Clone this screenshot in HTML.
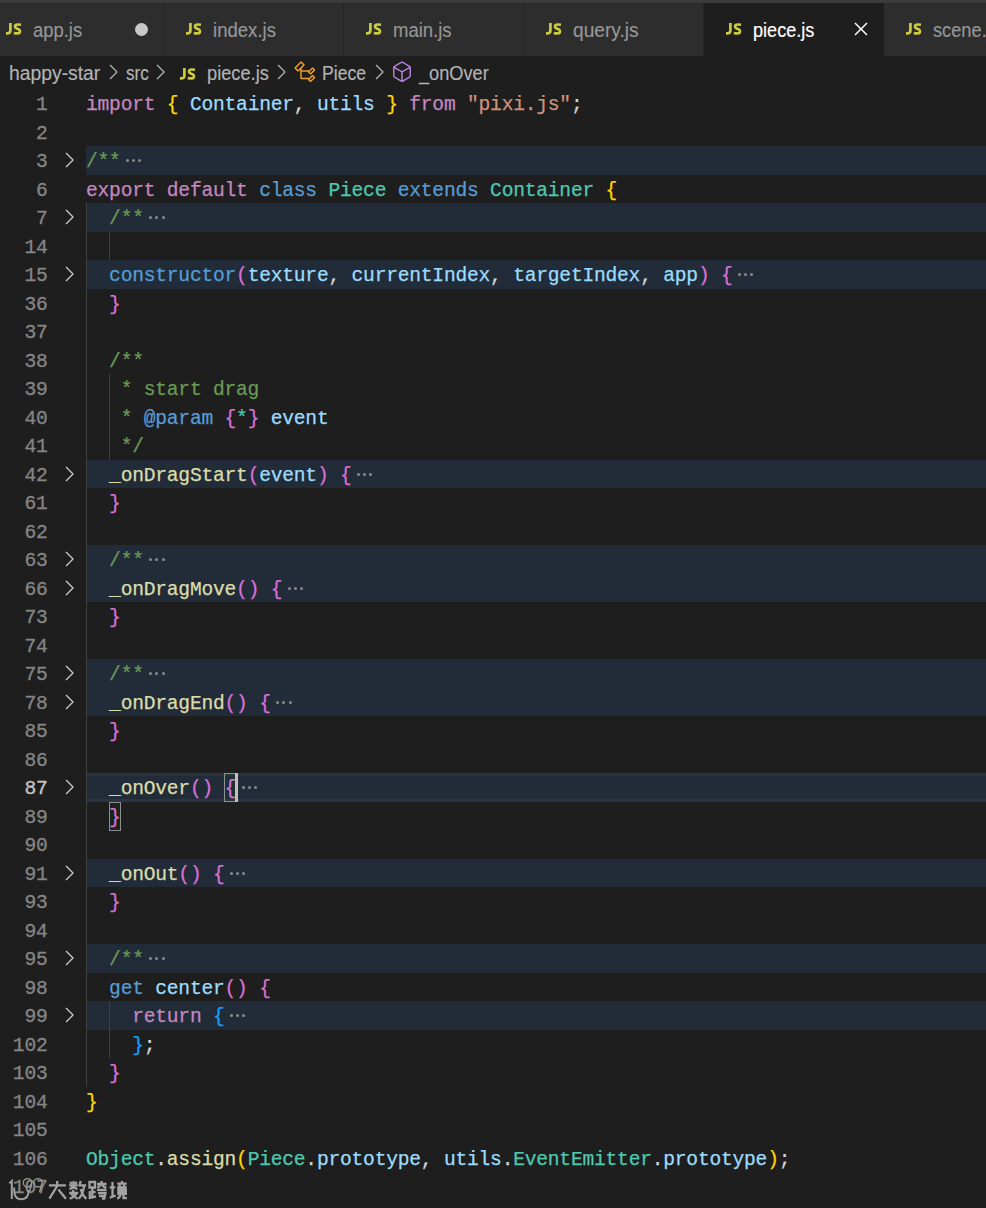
<!DOCTYPE html>
<html><head><meta charset="utf-8"><style>
*{margin:0;padding:0;box-sizing:border-box}
html,body{width:986px;height:1208px;overflow:hidden;background:#1e1e1e}
body{position:relative;font-family:"Liberation Sans",sans-serif}
#topstrip{position:absolute;left:0;top:0;width:986px;height:3px;background:#3b3b3b}
#tabs{position:absolute;left:0;top:3px;width:986px;height:53px;background:#252526;overflow:hidden}
.tab{position:absolute;top:0;width:179px;height:53px;background:#2d2d2d}
.tab.active{background:#1e1e1e;width:180px}
.tab .js{position:absolute;left:22px;top:19px;}
.tab .nm{position:absolute;left:49px;top:14px;font-size:18px;color:#979797;white-space:nowrap;line-height:24px}
.tab.active .nm{color:#ffffff}
.dirty{position:absolute;left:151px;top:20px;width:12px;height:12px;border-radius:6px;background:#c5c5c5}
.close{position:absolute;left:151px;top:20px}
#crumbs{position:absolute;left:0;top:56px;width:986px;height:33px;background:#1e1e1e;color:#c3c3c3;font-size:18px;white-space:nowrap}
#crumbs span{position:absolute;top:5px;line-height:24px}
#crumbs svg{position:absolute}
.row{position:absolute;left:86px;height:28.5px;line-height:28.5px;font-family:"Liberation Mono",monospace;font-size:19.6px;letter-spacing:-0.214px;white-space:pre;color:#d4d4d4;padding-top:1.5px;-webkit-text-stroke:0.25px currentColor}
.row span{white-space:pre}
.ln{position:absolute;left:0;width:47.5px;text-align:right;height:28.5px;line-height:28.5px;font-family:"Liberation Mono",monospace;font-size:19.6px;letter-spacing:-0.214px;color:#858585;padding-top:1.5px;-webkit-text-stroke:0.3px currentColor}
.lact{color:#c6c6c6}
.fb{position:absolute;left:86px;width:900px;height:28.5px;background:#212c38}
.fb.act{border-top:3px solid #2a3541;border-bottom:3px solid #2a3541}
.chev{position:absolute;left:57.1px}
.dots{position:absolute;height:3px;width:20px}
.dots i{position:absolute;top:0;width:3px;height:3px;border-radius:1.5px;background:#8a8a8a}
.dots i:nth-child(1){left:0}
.dots i:nth-child(2){left:6.2px}
.dots i:nth-child(3){left:12.4px}
.g{position:absolute;width:1px;background:#404040}
.k{color:#c586c0}.s{color:#569cd6}.t{color:#4ec9b0}.v{color:#9cdcfe}.f{color:#dcdcaa}.q{color:#ce9178}
.c{color:#6a9955}.p{color:#d4d4d4}.y{color:#ffd700}.o{color:#da70d6}.u{color:#179fff}
.bm{position:absolute;border:1.3px solid #8f8f8f;background:rgba(0,100,0,0.1)}
.cursor{position:absolute;width:3px;background:#c0c0c0}
#wm{position:absolute;left:0;top:1170px}
</style></head>
<body>
<div id="topstrip"></div>
<div id="tabs"></div><div style="position:absolute;left:-16px;top:3px;width:179px;height:53px;background:#2d2d2d"></div><svg style="position:absolute;left:6px;top:22.7px" width="16" height="12" viewBox="0 0 16 12"><g fill="none" stroke="#cbcb41" stroke-width="2.7"><path d="M4.4 0 V7.6 Q4.4 10.3 1.8 10.3 H0"/><path d="M15 1.7 Q13.5 1.5 11.8 1.5 Q9 1.5 9 3.5 Q9 5 11.8 5.9 Q14 6.6 14 8.2 Q14 10.4 11.4 10.4 Q9.6 10.4 7.8 9.9" stroke-width="2.6"/></g></svg><div style="position:absolute;left:32.50px;top:21.39px;font-size:19.5px;line-height:19.5px;color:#969696;white-space:nowrap;-webkit-text-stroke:0.15px #969696;transform:scaleX(0.9438);transform-origin:0 0;">app.js</div><div style="position:absolute;left:134.9px;top:22.5px;width:13px;height:13px;border-radius:50%;background:#c8c8c8"></div><div style="position:absolute;left:164px;top:3px;width:179px;height:53px;background:#2d2d2d"></div><svg style="position:absolute;left:186px;top:22.7px" width="16" height="12" viewBox="0 0 16 12"><g fill="none" stroke="#cbcb41" stroke-width="2.7"><path d="M4.4 0 V7.6 Q4.4 10.3 1.8 10.3 H0"/><path d="M15 1.7 Q13.5 1.5 11.8 1.5 Q9 1.5 9 3.5 Q9 5 11.8 5.9 Q14 6.6 14 8.2 Q14 10.4 11.4 10.4 Q9.6 10.4 7.8 9.9" stroke-width="2.6"/></g></svg><div style="position:absolute;left:212.70px;top:21.39px;font-size:19.5px;line-height:19.5px;color:#969696;white-space:nowrap;-webkit-text-stroke:0.15px #969696;transform:scaleX(0.9527);transform-origin:0 0;">index.js</div><div style="position:absolute;left:344px;top:3px;width:179px;height:53px;background:#2d2d2d"></div><svg style="position:absolute;left:366px;top:22.7px" width="16" height="12" viewBox="0 0 16 12"><g fill="none" stroke="#cbcb41" stroke-width="2.7"><path d="M4.4 0 V7.6 Q4.4 10.3 1.8 10.3 H0"/><path d="M15 1.7 Q13.5 1.5 11.8 1.5 Q9 1.5 9 3.5 Q9 5 11.8 5.9 Q14 6.6 14 8.2 Q14 10.4 11.4 10.4 Q9.6 10.4 7.8 9.9" stroke-width="2.6"/></g></svg><div style="position:absolute;left:392.60px;top:21.39px;font-size:19.5px;line-height:19.5px;color:#969696;white-space:nowrap;-webkit-text-stroke:0.15px #969696;transform:scaleX(0.9486);transform-origin:0 0;">main.js</div><div style="position:absolute;left:524px;top:3px;width:179px;height:53px;background:#2d2d2d"></div><svg style="position:absolute;left:546px;top:22.7px" width="16" height="12" viewBox="0 0 16 12"><g fill="none" stroke="#cbcb41" stroke-width="2.7"><path d="M4.4 0 V7.6 Q4.4 10.3 1.8 10.3 H0"/><path d="M15 1.7 Q13.5 1.5 11.8 1.5 Q9 1.5 9 3.5 Q9 5 11.8 5.9 Q14 6.6 14 8.2 Q14 10.4 11.4 10.4 Q9.6 10.4 7.8 9.9" stroke-width="2.6"/></g></svg><div style="position:absolute;left:572.50px;top:21.39px;font-size:19.5px;line-height:19.5px;color:#969696;white-space:nowrap;-webkit-text-stroke:0.15px #969696;transform:scaleX(0.9831);transform-origin:0 0;">query.js</div><div style="position:absolute;left:704px;top:3px;width:180px;height:53px;background:#1e1e1e"></div><svg style="position:absolute;left:726px;top:22.7px" width="16" height="12" viewBox="0 0 16 12"><g fill="none" stroke="#cbcb41" stroke-width="2.7"><path d="M4.4 0 V7.6 Q4.4 10.3 1.8 10.3 H0"/><path d="M15 1.7 Q13.5 1.5 11.8 1.5 Q9 1.5 9 3.5 Q9 5 11.8 5.9 Q14 6.6 14 8.2 Q14 10.4 11.4 10.4 Q9.6 10.4 7.8 9.9" stroke-width="2.6"/></g></svg><div style="position:absolute;left:753.00px;top:21.39px;font-size:19.5px;line-height:19.5px;color:#ffffff;white-space:nowrap;-webkit-text-stroke:0.15px #ffffff;transform:scaleX(0.9286);transform-origin:0 0;">piece.js</div><svg style="position:absolute;left:849.4px;top:16.6px" width="24" height="24" viewBox="0 0 16 16"><path d="M8 8.707l3.646 3.647.708-.707L8.707 8l3.647-3.646-.707-.708L8 7.293 4.354 3.646l-.707.708L7.293 8l-3.646 3.646.707.708L8 8.707z" fill="#ffffff"/></svg><div style="position:absolute;left:884px;top:3px;width:179px;height:53px;background:#2d2d2d"></div><svg style="position:absolute;left:906px;top:22.7px" width="16" height="12" viewBox="0 0 16 12"><g fill="none" stroke="#cbcb41" stroke-width="2.7"><path d="M4.4 0 V7.6 Q4.4 10.3 1.8 10.3 H0"/><path d="M15 1.7 Q13.5 1.5 11.8 1.5 Q9 1.5 9 3.5 Q9 5 11.8 5.9 Q14 6.6 14 8.2 Q14 10.4 11.4 10.4 Q9.6 10.4 7.8 9.9" stroke-width="2.6"/></g></svg><div style="position:absolute;left:932.70px;top:21.39px;font-size:19.5px;line-height:19.5px;color:#969696;white-space:nowrap;-webkit-text-stroke:0.15px #969696;transform:scaleX(0.9350);transform-origin:0 0;">scene.js</div>
<div id="crumbs"></div><div style="position:absolute;left:9.40px;top:62.97px;font-size:20px;line-height:20px;color:#b4b4b4;white-space:nowrap;-webkit-text-stroke:0.15px #b4b4b4;transform:scaleX(0.9661);transform-origin:0 0;">happy-star</div><svg style="position:absolute;left:101.4275px;top:59.8px" width="24" height="24" viewBox="0 0 16 16"><path d="M10.072 8.024L5.715 3.667l.618-.62L11 7.716v.618L6.333 13l-.618-.619 4.357-4.357z" fill="#b4b4b4"/></svg><div style="position:absolute;left:125.50px;top:62.97px;font-size:20px;line-height:20px;color:#b4b4b4;white-space:nowrap;-webkit-text-stroke:0.15px #b4b4b4;transform:scaleX(0.8552);transform-origin:0 0;">src</div><svg style="position:absolute;left:148.4275px;top:59.8px" width="24" height="24" viewBox="0 0 16 16"><path d="M10.072 8.024L5.715 3.667l.618-.62L11 7.716v.618L6.333 13l-.618-.619 4.357-4.357z" fill="#b4b4b4"/></svg><svg style="position:absolute;left:180px;top:68px" width="16" height="12" viewBox="0 0 16 12"><g fill="none" stroke="#cbcb41" stroke-width="2.7"><path d="M4.4 0 V7.6 Q4.4 10.3 1.8 10.3 H0"/><path d="M15 1.7 Q13.5 1.5 11.8 1.5 Q9 1.5 9 3.5 Q9 5 11.8 5.9 Q14 6.6 14 8.2 Q14 10.4 11.4 10.4 Q9.6 10.4 7.8 9.9" stroke-width="2.6"/></g></svg><div style="position:absolute;left:206.70px;top:62.97px;font-size:20px;line-height:20px;color:#b4b4b4;white-space:nowrap;-webkit-text-stroke:0.15px #b4b4b4;transform:scaleX(0.9112);transform-origin:0 0;">piece.js</div><svg style="position:absolute;left:269.02750000000003px;top:59.8px" width="24" height="24" viewBox="0 0 16 16"><path d="M10.072 8.024L5.715 3.667l.618-.62L11 7.716v.618L6.333 13l-.618-.619 4.357-4.357z" fill="#b4b4b4"/></svg><svg style="position:absolute;left:292.5px;top:59.8px" width="24" height="24" viewBox="0 0 16 16"><path d="M11.34 9.71h.71l2.67-2.67v-.71L13.38 5h-.7l-1.82 1.81h-5V5.56l1.86-1.85V3l-2-2H5L1 5v.71l2 2h.71l1.14-1.15v5.79l.5.5H10v.52l1.33 1.34h.71l2.67-2.67v-.71L13.37 10h-.7l-1.86 1.85h-5v-4H10v.48l1.34 1.38zm1.69-3.65l.63.63-2 2-.63-.63 2-2zm0 5l.63.63-2 2-.63-.63 2-2zM3.35 6.65L2.06 5.36l3.29-3.3 1.3 1.3-3.3 3.29z" fill="#ee9d28"/></svg><div style="position:absolute;left:321.70px;top:62.97px;font-size:20px;line-height:20px;color:#b4b4b4;white-space:nowrap;-webkit-text-stroke:0.15px #b4b4b4;transform:scaleX(0.8816);transform-origin:0 0;">Piece</div><svg style="position:absolute;left:367.2275px;top:59.8px" width="24" height="24" viewBox="0 0 16 16"><path d="M10.072 8.024L5.715 3.667l.618-.62L11 7.716v.618L6.333 13l-.618-.619 4.357-4.357z" fill="#b4b4b4"/></svg><svg style="position:absolute;left:390px;top:59.8px" width="24" height="24" viewBox="0 0 16 16"><path d="M13.51 4l-5-3h-1l-5 3-.49.86v6l.49.85 5 3h1l5-3 .49-.85v-6L13.51 4zm-6 9.56l-4.5-2.7V5.7l4.5 2.45v5.41zM3.27 4.7l4.74-2.84 4.74 2.84-4.74 2.59L3.27 4.7zm9.74 6.16l-4.5 2.7V8.15l4.5-2.45v5.16z" fill="#b180d7"/></svg><div style="position:absolute;left:418.69px;top:62.97px;font-size:20px;line-height:20px;color:#b4b4b4;white-space:nowrap;-webkit-text-stroke:0.15px #b4b4b4;transform:scaleX(0.9089);transform-origin:0 0;">_onOver</div>
<div id="editor">
<div class="fb" style="top:146px;height:29px"></div><div class="fb" style="top:203px;height:29px"></div><div class="fb" style="top:260px;height:29px"></div><div class="fb" style="top:460px;height:28px"></div><div class="fb" style="top:545px;height:29px"></div><div class="fb" style="top:574px;height:28px"></div><div class="fb" style="top:659px;height:29px"></div><div class="fb" style="top:688px;height:28px"></div><div class="fb act" style="top:773px;height:29px"></div><div class="fb" style="top:859px;height:28px"></div><div class="fb" style="top:944px;height:29px"></div><div class="fb" style="top:1001px;height:29px"></div>
<div class="g" style="left:86.0px;top:203px;height:884px"></div><div class="g" style="left:109.1px;top:232px;height:28px"></div><div class="g" style="left:109.1px;top:374px;height:86px"></div><div class="g" style="left:109.1px;top:1001px;height:57px"></div>
<div class="bm" style="left:224px;top:773px;width:14px;height:29px"></div>
<div class="bm" style="left:109px;top:802px;width:12px;height:28.5px"></div>
<div class="cursor" style="left:235px;top:773px;height:29px"></div>
<div class="ln" style="top:89px">1</div><div class="ln" style="top:118px">2</div><svg class="chev" style="top:148.4px" width="24" height="24" viewBox="0 0 16 16"><path d="M10.072 8.024L5.715 3.667l.618-.62L11 7.716v.618L6.333 13l-.618-.619 4.357-4.357z" fill="#cccccc"/></svg><div class="ln" style="top:146px">3</div><div class="ln" style="top:175px">6</div><svg class="chev" style="top:205.4px" width="24" height="24" viewBox="0 0 16 16"><path d="M10.072 8.024L5.715 3.667l.618-.62L11 7.716v.618L6.333 13l-.618-.619 4.357-4.357z" fill="#cccccc"/></svg><div class="ln" style="top:203px">7</div><div class="ln" style="top:232px">14</div><svg class="chev" style="top:262.4px" width="24" height="24" viewBox="0 0 16 16"><path d="M10.072 8.024L5.715 3.667l.618-.62L11 7.716v.618L6.333 13l-.618-.619 4.357-4.357z" fill="#cccccc"/></svg><div class="ln" style="top:260px">15</div><div class="ln" style="top:289px">36</div><div class="ln" style="top:317px">37</div><div class="ln" style="top:346px">38</div><div class="ln" style="top:374px">39</div><div class="ln" style="top:403px">40</div><div class="ln" style="top:431px">41</div><svg class="chev" style="top:462.4px" width="24" height="24" viewBox="0 0 16 16"><path d="M10.072 8.024L5.715 3.667l.618-.62L11 7.716v.618L6.333 13l-.618-.619 4.357-4.357z" fill="#cccccc"/></svg><div class="ln" style="top:460px">42</div><div class="ln" style="top:488px">61</div><div class="ln" style="top:517px">62</div><svg class="chev" style="top:547.4px" width="24" height="24" viewBox="0 0 16 16"><path d="M10.072 8.024L5.715 3.667l.618-.62L11 7.716v.618L6.333 13l-.618-.619 4.357-4.357z" fill="#cccccc"/></svg><div class="ln" style="top:545px">63</div><svg class="chev" style="top:576.4px" width="24" height="24" viewBox="0 0 16 16"><path d="M10.072 8.024L5.715 3.667l.618-.62L11 7.716v.618L6.333 13l-.618-.619 4.357-4.357z" fill="#cccccc"/></svg><div class="ln" style="top:574px">66</div><div class="ln" style="top:602px">73</div><div class="ln" style="top:631px">74</div><svg class="chev" style="top:661.4px" width="24" height="24" viewBox="0 0 16 16"><path d="M10.072 8.024L5.715 3.667l.618-.62L11 7.716v.618L6.333 13l-.618-.619 4.357-4.357z" fill="#cccccc"/></svg><div class="ln" style="top:659px">75</div><svg class="chev" style="top:690.4px" width="24" height="24" viewBox="0 0 16 16"><path d="M10.072 8.024L5.715 3.667l.618-.62L11 7.716v.618L6.333 13l-.618-.619 4.357-4.357z" fill="#cccccc"/></svg><div class="ln" style="top:688px">78</div><div class="ln" style="top:716px">85</div><div class="ln" style="top:745px">86</div><svg class="chev" style="top:775.4px" width="24" height="24" viewBox="0 0 16 16"><path d="M10.072 8.024L5.715 3.667l.618-.62L11 7.716v.618L6.333 13l-.618-.619 4.357-4.357z" fill="#cccccc"/></svg><div class="ln lact" style="top:773px">87</div><div class="ln" style="top:802px">89</div><div class="ln" style="top:830px">90</div><svg class="chev" style="top:861.4px" width="24" height="24" viewBox="0 0 16 16"><path d="M10.072 8.024L5.715 3.667l.618-.62L11 7.716v.618L6.333 13l-.618-.619 4.357-4.357z" fill="#cccccc"/></svg><div class="ln" style="top:859px">91</div><div class="ln" style="top:887px">93</div><div class="ln" style="top:916px">94</div><svg class="chev" style="top:946.4px" width="24" height="24" viewBox="0 0 16 16"><path d="M10.072 8.024L5.715 3.667l.618-.62L11 7.716v.618L6.333 13l-.618-.619 4.357-4.357z" fill="#cccccc"/></svg><div class="ln" style="top:944px">95</div><div class="ln" style="top:973px">98</div><svg class="chev" style="top:1003.4px" width="24" height="24" viewBox="0 0 16 16"><path d="M10.072 8.024L5.715 3.667l.618-.62L11 7.716v.618L6.333 13l-.618-.619 4.357-4.357z" fill="#cccccc"/></svg><div class="ln" style="top:1001px">99</div><div class="ln" style="top:1030px">102</div><div class="ln" style="top:1058px">103</div><div class="ln" style="top:1087px">104</div><div class="ln" style="top:1115px">105</div><div class="ln" style="top:1144px">106</div><div class="ln" style="top:1172px">107</div>
<div class="row" style="top:89px"><span class="k">import</span><span class="p">&nbsp;</span><span class="y">{</span><span class="p">&nbsp;</span><span class="v">Container</span><span class="p">,&nbsp;</span><span class="v">utils</span><span class="p">&nbsp;</span><span class="y">}</span><span class="p">&nbsp;</span><span class="k">from</span><span class="p">&nbsp;</span><span class="q">"pixi.js"</span><span class="p">;</span></div><div class="row" style="top:118px"></div><div class="row" style="top:146px"><span class="c">/**</span></div><div class="row" style="top:175px"><span class="k">export</span><span class="p">&nbsp;</span><span class="k">default</span><span class="p">&nbsp;</span><span class="s">class</span><span class="p">&nbsp;</span><span class="t">Piece</span><span class="p">&nbsp;</span><span class="s">extends</span><span class="p">&nbsp;</span><span class="t">Container</span><span class="p">&nbsp;</span><span class="y">{</span></div><div class="row" style="top:203px"><span class="p">&nbsp;&nbsp;</span><span class="c">/**</span></div><div class="row" style="top:232px"></div><div class="row" style="top:260px"><span class="p">&nbsp;&nbsp;</span><span class="s">constructor</span><span class="o">(</span><span class="v">texture</span><span class="p">,&nbsp;</span><span class="v">currentIndex</span><span class="p">,&nbsp;</span><span class="v">targetIndex</span><span class="p">,&nbsp;</span><span class="v">app</span><span class="o">)</span><span class="p">&nbsp;</span><span class="o">{</span></div><div class="row" style="top:289px"><span class="p">&nbsp;&nbsp;</span><span class="o">}</span></div><div class="row" style="top:317px"></div><div class="row" style="top:346px"><span class="p">&nbsp;&nbsp;</span><span class="c">/**</span></div><div class="row" style="top:374px"><span class="p">&nbsp;&nbsp;</span><span class="c">&nbsp;* start drag</span></div><div class="row" style="top:403px"><span class="p">&nbsp;&nbsp;</span><span class="c">&nbsp;* </span><span class="s">@param</span><span class="p">&nbsp;</span><span class="o">{</span><span class="t">*</span><span class="o">}</span><span class="p">&nbsp;</span><span class="v">event</span></div><div class="row" style="top:431px"><span class="p">&nbsp;&nbsp;</span><span class="c">&nbsp;*/</span></div><div class="row" style="top:460px"><span class="p">&nbsp;&nbsp;</span><span class="f">_onDragStart</span><span class="o">(</span><span class="v">event</span><span class="o">)</span><span class="p">&nbsp;</span><span class="o">{</span></div><div class="row" style="top:488px"><span class="p">&nbsp;&nbsp;</span><span class="o">}</span></div><div class="row" style="top:517px"></div><div class="row" style="top:545px"><span class="p">&nbsp;&nbsp;</span><span class="c">/**</span></div><div class="row" style="top:574px"><span class="p">&nbsp;&nbsp;</span><span class="f">_onDragMove</span><span class="o">()</span><span class="p">&nbsp;</span><span class="o">{</span></div><div class="row" style="top:602px"><span class="p">&nbsp;&nbsp;</span><span class="o">}</span></div><div class="row" style="top:631px"></div><div class="row" style="top:659px"><span class="p">&nbsp;&nbsp;</span><span class="c">/**</span></div><div class="row" style="top:688px"><span class="p">&nbsp;&nbsp;</span><span class="f">_onDragEnd</span><span class="o">()</span><span class="p">&nbsp;</span><span class="o">{</span></div><div class="row" style="top:716px"><span class="p">&nbsp;&nbsp;</span><span class="o">}</span></div><div class="row" style="top:745px"></div><div class="row" style="top:773px"><span class="p">&nbsp;&nbsp;</span><span class="f">_onOver</span><span class="o">()</span><span class="p">&nbsp;</span><span class="o">{</span></div><div class="row" style="top:802px"><span class="p">&nbsp;&nbsp;</span><span class="o">}</span></div><div class="row" style="top:830px"></div><div class="row" style="top:859px"><span class="p">&nbsp;&nbsp;</span><span class="f">_onOut</span><span class="o">()</span><span class="p">&nbsp;</span><span class="o">{</span></div><div class="row" style="top:887px"><span class="p">&nbsp;&nbsp;</span><span class="o">}</span></div><div class="row" style="top:916px"></div><div class="row" style="top:944px"><span class="p">&nbsp;&nbsp;</span><span class="c">/**</span></div><div class="row" style="top:973px"><span class="p">&nbsp;&nbsp;</span><span class="s">get</span><span class="p">&nbsp;</span><span class="v">center</span><span class="o">()</span><span class="p">&nbsp;</span><span class="o">{</span></div><div class="row" style="top:1001px"><span class="p">&nbsp;&nbsp;&nbsp;&nbsp;</span><span class="k">return</span><span class="p">&nbsp;</span><span class="u">{</span></div><div class="row" style="top:1030px"><span class="p">&nbsp;&nbsp;&nbsp;&nbsp;</span><span class="u">}</span><span class="p">;</span></div><div class="row" style="top:1058px"><span class="p">&nbsp;&nbsp;</span><span class="o">}</span></div><div class="row" style="top:1087px"><span class="y">}</span></div><div class="row" style="top:1115px"></div><div class="row" style="top:1144px"><span class="t">Object</span><span class="p">.</span><span class="f">assign</span><span class="y">(</span><span class="t">Piece</span><span class="p">.</span><span class="v">prototype</span><span class="p">,&nbsp;</span><span class="v">utils</span><span class="p">.</span><span class="t">EventEmitter</span><span class="p">.</span><span class="v">prototype</span><span class="y">)</span><span class="p">;</span></div><div class="row" style="top:1172px"></div>
<div class="dots" style="left:126.1px;top:159px"><i></i><i></i><i></i></div><div class="dots" style="left:149.2px;top:216px"><i></i><i></i><i></i></div><div class="dots" style="left:738.1px;top:273px"><i></i><i></i><i></i></div><div class="dots" style="left:357.1px;top:473px"><i></i><i></i><i></i></div><div class="dots" style="left:149.2px;top:558px"><i></i><i></i><i></i></div><div class="dots" style="left:287.8px;top:587px"><i></i><i></i><i></i></div><div class="dots" style="left:149.2px;top:672px"><i></i><i></i><i></i></div><div class="dots" style="left:276.2px;top:701px"><i></i><i></i><i></i></div><div class="dots" style="left:241.6px;top:786px"><i></i><i></i><i></i></div><div class="dots" style="left:230.1px;top:872px"><i></i><i></i><i></i></div><div class="dots" style="left:149.2px;top:957px"><i></i><i></i><i></i></div><div class="dots" style="left:230.1px;top:1014px"><i></i><i></i><i></i></div>
</div>
<svg style="position:absolute;left:0;top:0" width="986" height="1208" viewBox="0 0 986 1208"><g fill="none" stroke="#a3a3a3" stroke-width="2.3" stroke-linecap="butt" stroke-linejoin="miter"><g transform="translate(48.4 1181)"><path d="M0.5 4.3 H17.5 M8.8 0 V5 L1 17.7 M10 8.5 L17.5 17.7"/></g><g transform="translate(68.7 1181)"><path d="M1.5 0.8 L2.8 3 M8 0.8 L6.7 3 M4.8 0 V8 M0.5 4.3 H9 M4.8 5 L1 8.5 M4.8 5 L8.5 8.5 M0.5 12 H9.5 M5 9 L2.5 14 M2.5 13 Q6 16 9 17.7 M8 12 Q6 16 1 17.7 M12 0 L10.5 5.5 M11 4.3 H17.5 M15.5 4.3 Q14.5 13 10 17.7 M12 8 Q14 15 17.7 17.7"/></g><g transform="translate(89.0 1181)"><path d="M0.5 1 H6 V6.5 H0.5 Z M3.3 6.5 V15.5 M0.8 10 V16.8 L7 15.5 M3.3 11 H6.5 M12.5 0 V3 M8 3 H17.5 M11.8 3.5 L8.5 7 M13 4.5 L17.2 7 M8 8.8 H17.5 M9 12 H16.5 L15.3 17.7 H13 M10 15 H15.5"/></g><g transform="translate(109.2 1181)"><path d="M0.5 6.3 H6 M3.3 1 V15.8 M0.5 16.8 L6.5 14.5 M12.8 0 V2.2 M8 2.7 H17.5 M10 3.8 L10.8 5.8 M15.4 3.8 L14.6 5.8 M8 6.5 H17.5 M9.2 8.6 H16.6 V12.8 H9.2 Z M9.2 10.7 H16.6 M11.2 12.8 Q11.2 16.5 8 17.7 M14.3 12.8 V17 H17.7"/></g></g><g fill="none" stroke="#a0a0a0" stroke-width="2"><path d="M9.3 1183.2 L11.8 1181 V1199"/><path d="M14.2 1187.5 Q13.5 1199.5 21.5 1199.3 Q28.8 1199 28.6 1190"/></g><g fill="none" stroke="#9a9a9a" stroke-width="1.3"><circle cx="27.5" cy="1182.8" r="4.2"/><circle cx="38" cy="1182.8" r="4.2"/><path d="M31.5 1183.5 L29.5 1192 M42 1183.5 L39.5 1192"/></g></svg>
</body></html>
